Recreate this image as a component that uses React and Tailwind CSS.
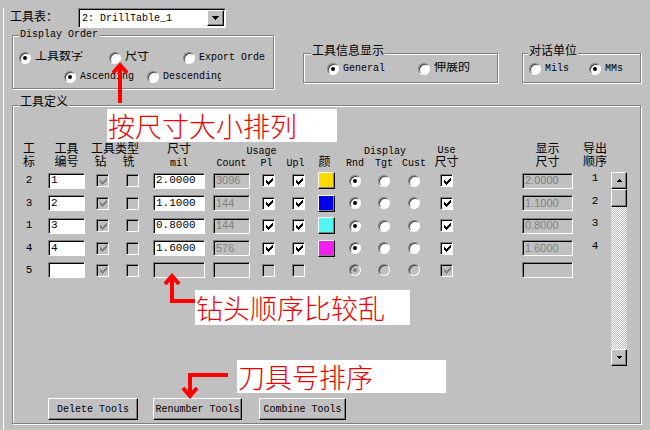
const ROWS = [
  { n: '2', id: '1', size: '2.0000', count: '3096', swatch: 'bg-[#ffd800]', disp: '2.0000', order: '1' },
  { n: '3', id: '2', size: '1.1000', count: '144', swatch: 'bg-[#0000e8]', disp: '1.1000', order: '2' },
  { n: '1', id: '3', size: '0.8000', count: '144', swatch: 'bg-[#55f5f5]', disp: '0.8000', order: '3' },
  { n: '4', id: '4', size: '1.6000', count: '576', swatch: 'bg-[#f020f0]', disp: '1.6000', order: '4' },
  { n: '5', id: '', size: '', count: '', swatch: null, disp: '', order: '', blank: true },
];

const CHECK_PX = [
  [6, 0, 1], [5, 1, 2], [0, 2, 1], [4, 2, 3], [0, 3, 2], [3, 3, 3], [0, 4, 5], [1, 5, 3], [2, 6, 1],
];

const COLS =
  'grid grid-cols-[18px_10px_37px_35px_25px_68px_37px_37px_23px_33px_24px_34px_26px_39px_56px_51px_6px_32px]';

function Radio({ on, disabled }) {
  return (
    <span
      className={`flex h-[12px] w-[12px] shrink-0 items-center justify-center rounded-full border border-t-[#808080] border-l-[#808080] border-r-white border-b-white shadow-[inset_1px_1px_0_#404040] ${
        disabled ? 'bg-[#c0c0c0]' : 'bg-white'
      }`}
    >
      {on && <span className={`h-[4px] w-[4px] rounded-full ${disabled ? 'bg-[#808080]' : 'bg-black'}`} />}
    </span>
  );
}

function Check({ on, disabled }) {
  return (
    <span
      className={`flex h-[13px] w-[13px] shrink-0 items-center justify-center border border-t-[#808080] border-l-[#808080] border-r-white border-b-white shadow-[inset_1px_1px_0_#000] ${
        disabled ? 'bg-[#c0c0c0]' : 'bg-white'
      }`}
    >
      {on && (
        <svg width="7" height="7" viewBox="0 0 7 7" shapeRendering="crispEdges" className="ml-[1px] mt-[1px]">
          {CHECK_PX.map(([x, y, w], i) => (
            <rect key={i} x={x} y={y} width={w} height="1" fill={disabled ? '#808080' : '#000'} />
          ))}
        </svg>
      )}
    </span>
  );
}

function Field({ value, w, disabled }) {
  return (
    <div
      className={`flex h-[16px] items-center overflow-hidden whitespace-nowrap border border-t-[#808080] border-l-[#808080] border-r-white border-b-white pl-[2px] shadow-[inset_1px_1px_0_#000] ${w} ${
        disabled
          ? "bg-[#c0c0c0] font-['Liberation_Sans',sans-serif] text-[11px] text-[#808080]"
          : 'bg-white text-[11px] text-black'
      }`}
    >
      {value}
    </div>
  );
}

function Group({ title, className, legendClass, children }) {
  return (
    <div className={`relative border border-[#808080] shadow-[inset_1px_1px_0_#fff,1px_1px_0_#fff] ${className}`}>
      <span className={`absolute whitespace-nowrap bg-[#c0c0c0] px-[1px] leading-[12px] ${legendClass}`}>{title}</span>
      {children}
    </div>
  );
}

function Option({ on, label, className, labelClass = 'text-[12px]' }) {
  return (
    <div className={`flex items-center gap-[4px] ${className}`}>
      <Radio on={on} />
      <span className={`overflow-hidden whitespace-nowrap leading-[13px] ${labelClass}`}>{label}</span>
    </div>
  );
}

function Arrow({ dir }) {
  return (
    <svg width="7" height="4" viewBox="0 0 7 4" shapeRendering="crispEdges">
      {dir === 'down' ? <path d="M0 0h7L3.5 4z" fill="#000" /> : <path d="M0 4h7L3.5 0z" fill="#000" />}
    </svg>
  );
}

const RAISED = 'border border-t-white border-l-white border-r-black border-b-black shadow-[inset_-1px_-1px_0_#808080]';

function Button({ children, className }) {
  return (
    <div className={`flex h-[22px] items-center justify-center bg-[#c0c0c0] text-[10px] ${RAISED} ${className}`}>
      {children}
    </div>
  );
}

function Cell({ col, row, children, className = '' }) {
  return <div className={`flex items-center justify-center whitespace-nowrap ${col} ${row} ${className}`}>{children}</div>;
}

export default function App() {
  return (
    <div className="relative h-[430px] w-[650px] overflow-hidden bg-[#c0c0c0] font-['Liberation_Mono','Noto_Sans_CJK_SC',monospace] text-[10px] text-black">
      <div className="ml-[3px] h-[429px] w-[647px] border-b border-l border-b-[#808080] border-l-white">
        {/* tool table */}
        <div className="mt-[8px] flex h-[20px] items-center">
          <span className="ml-[6px] w-[68px] text-[12px] leading-[12px]">工具表：</span>
          <div className="flex h-[20px] w-[148px] items-center border border-t-[#808080] border-l-[#808080] border-r-white border-b-white bg-white shadow-[inset_1px_1px_0_#000]">
            <span className="flex-1 pl-[3px] pt-[1px] text-[10px]">2: DrillTable_1</span>
            <span className={`mr-[1px] flex h-[16px] w-[17px] items-center justify-center bg-[#c0c0c0] ${RAISED}`}>
              <Arrow dir="down" />
            </span>
          </div>
        </div>

        {/* option groups */}
        <div className="flex items-start">
          <Group title="Display Order" className="ml-[8px] mt-[7px] h-[54px] w-[262px]" legendClass="left-[6px] top-[-7px] text-[10px]">
            <div className="mt-[15px] flex h-[13px] items-center">
              <Option on label="工具数字" className="ml-[6px] w-[90px]" />
              <Option label="尺寸" className="w-[74px]" />
              <Option label="Export Order" className="w-[83px]" labelClass="w-[66px] text-[10px]" />
            </div>
            <div className="mt-[6px] flex h-[13px] items-center">
              <Option on label="Ascending" className="ml-[51px] w-[83px]" labelClass="text-[10px]" />
              <Option label="Descending" labelClass="w-[58px] text-[10px]" />
            </div>
          </Group>
          <Group title="工具信息显示" className="ml-[29px] mt-[25px] h-[30px] w-[195px]" legendClass="left-[7px] top-[-8px] text-[12px]">
            <div className="mt-[8px] flex h-[13px] items-center">
              <Option on label="General" className="ml-[23px] w-[91px]" labelClass="text-[10px]" />
              <Option label="伸展的" />
            </div>
          </Group>
          <Group title="对话单位" className="ml-[24px] mt-[25px] h-[30px] w-[119px]" legendClass="left-[5px] top-[-8px] text-[12px]">
            <div className="mt-[8px] flex h-[13px] items-center">
              <Option label="Mils" className="ml-[6px] w-[60px]" labelClass="text-[10px]" />
              <Option on label="MMs" labelClass="text-[10px]" />
            </div>
          </Group>
        </div>

        {/* tool definition */}
        <Group title="工具定义" className="ml-[8px] mt-[16px] h-[319px] w-[629px]" legendClass="left-[6px] top-[-9px] text-[12px]">
          <div className="ml-[7px] mt-[38px] flex items-start">
            <div className="w-[591px]">
              <div className={`${COLS} grid-rows-[13px_13px] text-[12px] leading-[13px]`}>
                <Cell col="col-start-1" row="row-start-1">工</Cell>
                <Cell col="col-start-1" row="row-start-2">标</Cell>
                <Cell col="col-start-3" row="row-start-1">工具</Cell>
                <Cell col="col-start-3" row="row-start-2">编号</Cell>
                <Cell col="col-start-4 col-span-2" row="row-start-1">工具类型</Cell>
                <Cell col="col-start-4" row="row-start-2" className="pr-[4px]">钻</Cell>
                <Cell col="col-start-5" row="row-start-2" className="pr-[8px]">铣</Cell>
                <Cell col="col-start-6" row="row-start-1">尺寸</Cell>
                <Cell col="col-start-6" row="row-start-2" className="text-[10px]">mil</Cell>
                <Cell col="col-start-7 col-span-3" row="row-start-1" className="pt-[2px] text-[10px]">Usage</Cell>
                <Cell col="col-start-7" row="row-start-2" className="text-[10px]">Count</Cell>
                <Cell col="col-start-8" row="row-start-2" className="pr-[4px] text-[10px]">Pl</Cell>
                <Cell col="col-start-9" row="row-start-2" className="pr-[6px] text-[10px]">Upl</Cell>
                <Cell col="col-start-10" row="row-start-2" className="pr-[4px]">颜</Cell>
                <Cell col="col-start-11 col-span-3" row="row-start-1" className="pt-[2px] text-[10px]">Display</Cell>
                <Cell col="col-start-11" row="row-start-2" className="text-[10px]">Rnd</Cell>
                <Cell col="col-start-12" row="row-start-2" className="text-[10px]">Tgt</Cell>
                <Cell col="col-start-13" row="row-start-2" className="text-[10px]">Cust</Cell>
                <Cell col="col-start-14" row="row-start-1" className="text-[10px]">Use</Cell>
                <Cell col="col-start-14" row="row-start-2">尺寸</Cell>
                <Cell col="col-start-16" row="row-start-1">显示</Cell>
                <Cell col="col-start-16" row="row-start-2">尺寸</Cell>
                <Cell col="col-start-18" row="row-start-1">导出</Cell>
                <Cell col="col-start-18" row="row-start-2">顺序</Cell>
              </div>

              <div className="mt-[2px] flex flex-col gap-y-[6.5px]">
                {ROWS.map((r) => (
                  <div key={r.n} className={`${COLS} h-[16px] items-center`}>
                    <div className="col-start-1 flex justify-center text-[11px]">{r.n}</div>
                    <div className="col-start-3">
                      <Field value={r.id} w="w-[37px]" />
                    </div>
                    <div className="col-start-4 flex justify-center">
                      <Check on disabled />
                    </div>
                    <div className="col-start-5 flex justify-center">
                      <Check disabled />
                    </div>
                    <div className="col-start-6 flex justify-center">
                      <Field value={r.size} w="w-[52px]" disabled={r.blank} />
                    </div>
                    <div className="col-start-7">
                      <Field value={r.count} w="w-[37px]" disabled />
                    </div>
                    <div className="col-start-8 flex justify-center">
                      <Check on={!r.blank} disabled={r.blank} />
                    </div>
                    <div className="col-start-9 flex justify-center">
                      <Check on={!r.blank} disabled={r.blank} />
                    </div>
                    <div className="col-start-10 flex justify-center">
                      {r.swatch && <span className={`h-[17px] w-[17px] ${RAISED} ${r.swatch}`} />}
                    </div>
                    <div className="col-start-11 flex justify-center">
                      <Radio on disabled={r.blank} />
                    </div>
                    <div className="col-start-12 flex justify-center">
                      <Radio disabled={r.blank} />
                    </div>
                    <div className="col-start-13 flex justify-center">
                      <Radio disabled={r.blank} />
                    </div>
                    <div className="col-start-14 flex justify-center">
                      <Check on disabled={r.blank} />
                    </div>
                    <div className="col-start-16">
                      <Field value={r.disp} w="w-[51px]" disabled />
                    </div>
                    <div className="col-start-18 flex -translate-y-[2px] justify-center text-[11px]">{r.order}</div>
                  </div>
                ))}
              </div>
            </div>

            {/* scrollbar */}
            <div className="mt-[28px] flex h-[194px] w-[16px] flex-col">
              <div className={`flex h-[17px] items-center justify-center bg-[#c0c0c0] ${RAISED}`}>
                <svg width="5" height="3" viewBox="0 0 5 3" shapeRendering="crispEdges">
                  <path d="M2 0h1v1h1v1h1v1H0V2h1V1h1z" fill="#000" />
                </svg>
              </div>
              <div className={`h-[18px] bg-[#c0c0c0] ${RAISED}`} />
              <div className="flex-1 bg-[image:repeating-conic-gradient(#c0c0c0_0%_25%,#ffffff_0%_50%)] bg-[length:2px_2px]" />
              <div className={`flex h-[17px] items-center justify-center bg-[#c0c0c0] ${RAISED}`}>
                <svg width="5" height="3" viewBox="0 0 5 3" shapeRendering="crispEdges">
                  <path d="M0 0h5v1H4v1H3v1H2V2H1V1H0z" fill="#000" />
                </svg>
              </div>
            </div>
          </div>

          <div className="mt-[32px] flex">
            <Button className="ml-[35px] w-[90px]">Delete Tools</Button>
            <Button className="ml-[15px] w-[89px]">Renumber Tools</Button>
            <Button className="ml-[17px] w-[87px]">Combine Tools</Button>
          </div>
        </Group>
      </div>

      {/* annotations */}
      <div className="absolute left-[107px] top-[109px] flex h-[33px] w-[230px] items-center bg-white pl-[1px] font-['Noto_Sans_CJK_SC',sans-serif] text-[27px] font-light leading-none text-[#f00000]">
        按尺寸大小排列
      </div>
      <div className="absolute left-[195px] top-[290px] flex h-[35px] w-[215px] items-center bg-white pl-[1px] font-['Noto_Sans_CJK_SC',sans-serif] text-[27px] font-light leading-none text-[#f00000]">
        钻头顺序比较乱
      </div>
      <div className="absolute left-[237px] top-[360px] flex h-[33px] w-[209px] items-center bg-white pl-[1px] font-['Noto_Sans_CJK_SC',sans-serif] text-[27px] font-light leading-none text-[#f00000]">
        刀具号排序
      </div>
      <svg className="pointer-events-none absolute left-0 top-0" width="650" height="430" viewBox="0 0 650 430">
        <g fill="none" stroke="#ff0000" strokeWidth="4" strokeLinejoin="miter">
          <path d="M120 103V66" />
          <path d="M113 73l7-8 7 8" />
          <path d="M195 301h-23v-24" />
          <path d="M165 284l7-8 7 8" />
          <path d="M228 375h-38v20" />
          <path d="M183 388l7 8 7-8" />
        </g>
      </svg>
    </div>
  );
}
